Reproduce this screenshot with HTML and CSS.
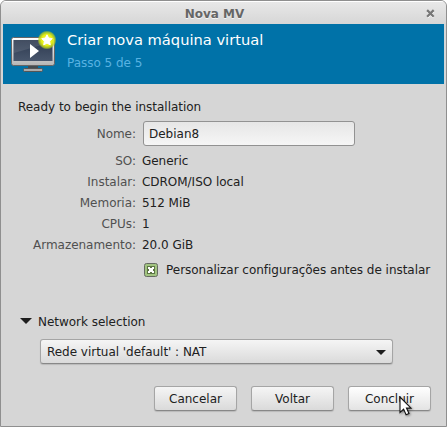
FILE: index.html
```html
<!DOCTYPE html>
<html lang="pt-BR">
<head>
<meta charset="utf-8">
<title>Nova MV</title>
<link rel="stylesheet" href="styles.css">
</head>
<body>
<div class="window">
  <header class="titlebar">
    <span class="title">Nova MV</span>
    <svg class="close" width="9" height="9" viewBox="0 0 9 9"><path d="M1.5 2.5l6 6M7.5 2.5l-6 6" stroke="#fff" stroke-width="2"/><path d="M1.100 1.100l6.600 6.600M7.700 1.100L1.100 7.700" stroke="#777" stroke-width="2.200"/></svg>
  </header>
  <section class="banner">
    <svg class="monitor" width="46" height="44" viewBox="0 0 46 44">
      <defs>
        <linearGradient id="frame" x2="0" y2="1"><stop offset="0" stop-color="#fff"/><stop offset="1" stop-color="#b5b5b5"/></linearGradient>
        <linearGradient id="screen" x2="0" y2="1"><stop offset="0" stop-color="#2d3a50"/><stop offset="1" stop-color="#48566c"/></linearGradient>
        <radialGradient id="glow"><stop offset="0" stop-color="#fcff60"/><stop offset=".6" stop-color="#e3ed14"/><stop offset=".85" stop-color="#b8d020" stop-opacity=".75"/><stop offset="1" stop-color="#a0c820" stop-opacity="0"/></radialGradient>
      </defs>
      <path d="M17 34h10v4H17z" fill="#444b50"/>
      <rect x="12.500" y="37.500" width="19" height="3" rx="1" fill="#ababab" stroke="#555"/>
      <rect x=".5" y="6.500" width="43" height="28" rx="2" fill="url(#frame)" stroke="#666"/>
      <rect x="2.500" y="9" width="39" height="21" fill="url(#screen)"/>
      <path d="M3 9h38v2L3 22z" fill="#fff" opacity=".1"/>
      <path d="M19 13v14l9-7z" fill="#fff"/>
      <circle cx="36" cy="9" r="9.500" fill="url(#glow)"/>
      <path d="M36 3.800l1.600 3.300 3.700.5-2.700 2.600.7 3.700-3.300-1.800-3.300 1.800.7-3.700-2.700-2.600 3.700-.5z" fill="#fff" stroke="#fff" stroke-linejoin="round"/>
    </svg>
    <div class="heading">
      <h1>Criar nova máquina virtual</h1>
      <p>Passo 5 de 5</p>
    </div>
  </section>
  <main class="content">
    <p class="intro">Ready to begin the installation</p>
    <div class="form">
      <label class="name-label" for="name">Nome:</label>
      <div class="field"><input id="name" type="text" value="Debian8"></div>
      <span class="key">SO:</span><span>Generic</span>
      <span class="key">Instalar:</span><span>CDROM/ISO local</span>
      <span class="key">Memoria:</span><span>512 MiB</span>
      <span class="key">CPUs:</span><span>1</span>
      <span class="key">Armazenamento:</span><span>20.0 GiB</span>
    </div>
    <div class="option">
      <svg width="14" height="14" viewBox="0 0 14 14"><rect x=".5" y=".5" width="13" height="13" rx="2" fill="#a2c481" stroke="#666b62"/><rect x="3" y="3" width="8" height="8" fill="#5d7545"/><path d="M4 4h2v1h2V4h2v2H9v2h1v2H8V9H6v1H4V8h1V6H4z" fill="#fff"/></svg>
      <span>Personalizar configurações antes de instalar</span>
    </div>
    <div class="expander">
      <svg width="12" height="6" viewBox="0 0 12 6"><path d="M0 0h12L6 6z" fill="#1e1e1e"/></svg>
      <span>Network selection</span>
    </div>
    <div class="combo">
      <span>Rede virtual 'default' : NAT</span>
      <svg width="10" height="5" viewBox="0 0 10 5"><path d="M0 0h10L5 5z" fill="#1e1e1e"/></svg>
    </div>
    <footer class="actions">
      <button>Cancelar</button>
      <button>Voltar</button>
      <button class="hover">Concluir</button>
    </footer>
  </main>
</div>
<svg class="cursor" width="15" height="22" viewBox="0 0 15 22"><path d="M1 1v15.500l3.600-3.400 2.500 5.600 2.900-1.300-2.500-5.300H12z" fill="#fff" stroke="#111" stroke-width="1.100"/></svg>
</body>
</html>
```
FILE: styles.css
```css
* { box-sizing: border-box; }
body {
  margin: 0;
  background: #fff;
  font: 12px/15px "DejaVu Sans", sans-serif;
  letter-spacing: -0.03px;
  color: #212121;
  white-space: nowrap;
}
h1, p { margin: 0; font-weight: normal; }
svg { display: block; flex: none; }
.window {
  width: 447px;
  height: 427px;
  border: 1px solid #8f8f8f;
  border-radius: 6px 6px 0 0;
  background: #d6d6d6;
  overflow: hidden;
}
.titlebar {
  display: flex;
  align-items: center;
  height: 23px;
  padding: 2px 11px 0 2px;
  border-top: 1px solid #fff;
  background: linear-gradient(#e8e8e8, #d6d6d6);
}
.close { margin-bottom: 2px; }
.title {
  flex: 1;
  text-align: center;
  font-weight: bold;
  color: #666;
  text-shadow: 0 1px #f4f4f4;
}
.banner {
  display: flex;
  height: 60px;
  margin: 0 2px;
  padding: 7px 0 0 8px;
  background: #0072a8;
}
.heading { margin-left: 10px; }
.heading h1 {
  font-size: 14.67px;
  line-height: 18px;
  letter-spacing: 0;
  color: #fff;
}
.heading p { margin-top: 7px; color: #59b2e2; }
.content { padding: 16px 15px 0 17px; }
.form {
  display: grid;
  grid-template-columns: 118px 1fr;
  column-gap: 6px;
  grid-template-rows: 36px repeat(5, 21px);
  align-items: center;
}
.key, .name-label { text-align: right; color: #505050; }
.name-label { align-self: start; padding-top: 12px; }
.field { align-self: start; padding: 6px 0 0 1px; }
input {
  display: block;
  width: 212px;
  height: 25px;
  padding: 0 5px;
  border: 1px solid #929292;
  border-radius: 3px;
  background: linear-gradient(#e6e6e6, #f6f6f6);
  font: inherit;
  color: inherit;
  outline: none;
}
.option {
  display: flex;
  align-items: flex-start;
  gap: 8px;
  margin: 7px 0 0 126px;
}
.expander {
  display: flex;
  align-items: center;
  gap: 6px;
  margin: 37px 0 0 2px;
}
.expander svg { margin-bottom: 3px; }
.combo {
  display: flex;
  align-items: center;
  justify-content: space-between;
  width: 353px;
  height: 25px;
  margin: 9px 0 0 22px;
  padding: 1px 6px 0;
}
.combo, button {
  border: 1px solid #a5a5a5;
  border-bottom-color: #888;
  border-radius: 3px;
  background: linear-gradient(#f5f5f5, #dadada);
  box-shadow: 0 1px 1px #0002;
}
.actions {
  display: flex;
  gap: 14px;
  margin: 22px 0 0 136px;
}
button {
  flex: none;
  width: 83px;
  height: 25px;
  padding: 1px 0 0;
  font: inherit;
  color: inherit;
}
.hover { background: linear-gradient(#fff, #e3e3e3); }
.cursor {
  position: absolute;
  left: 399px;
  top: 396px;
  filter: drop-shadow(1px 1px 1px #0006);
}
```
